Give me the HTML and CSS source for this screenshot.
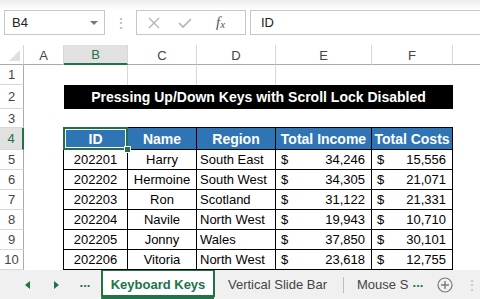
FILE: index.html
```html
<!DOCTYPE html>
<html lang="en">
  <head>
    <meta charset="UTF-8" />
    <link rel="stylesheet" href="styles.css" />
    <title>Keyboard Keys</title>
  </head>
  <body>
    <div id="ribbon-edge"></div>

    <!-- Formula bar -->
    <div id="formula-bar">
      <div class="name-box">
        <span>B4</span>
        <span class="drop"></span>
      </div>
      <div class="grip">&#8942;</div>
      <div class="fx-box">
        <svg width="12" height="12" viewBox="0 0 12 12"><path d="M1 1 L11 11 M11 1 L1 11" stroke="#b4b4b4" stroke-width="1.3" fill="none" /></svg>
        <svg width="14" height="12" viewBox="0 0 14 12"><path d="M1 6 L5 10 L13 2" stroke="#b4b4b4" stroke-width="1.6" fill="none" /></svg>
        <span class="fx">f<sub>x</sub></span>
      </div>
      <div class="formula-input">ID</div>
    </div>

    <!-- Sheet grid -->
    <div id="sheet">
      <div class="corner"><span class="tri"></span></div>
      <div class="hd">A</div>
      <div class="hd sel">B</div>
      <div class="hd">C</div>
      <div class="hd">D</div>
      <div class="hd">E</div>
      <div class="hd">F</div>
      <div class="hd last"></div>

      <div class="rh">1</div>
      <div class="c"></div>
      <div class="c g"></div>
      <div class="c g"></div>
      <div class="c g"></div>
      <div class="c"></div>
      <div class="c"></div>
      <div class="c"></div>

      <div class="rh">2</div>
      <div class="c"></div>
      <div class="title">Pressing Up/Down Keys with Scroll Lock Disabled</div>
      <div class="c"></div>

      <div class="rh">3</div>
      <div class="c"></div>
      <div class="c above"></div>
      <div class="c above"></div>
      <div class="c above"></div>
      <div class="c above"></div>
      <div class="c above"></div>
      <div class="c"></div>

      <div class="rh sel">4</div>
      <div class="c edge"></div>
      <div class="t th active">ID<span class="handle"></span></div>
      <div class="t th">Name</div>
      <div class="t th">Region</div>
      <div class="t th">Total Income</div>
      <div class="t th">Total Costs</div>
      <div class="c"></div>

      <div class="rh">5</div>
      <div class="c edge"></div>
      <div class="t mid">202201</div>
      <div class="t mid">Harry</div>
      <div class="t">South East</div>
      <div class="t money"><span>$</span><span>34,246</span></div>
      <div class="t money"><span>$</span><span>15,556</span></div>
      <div class="c"></div>

      <div class="rh">6</div>
      <div class="c edge"></div>
      <div class="t mid">202202</div>
      <div class="t mid">Hermoine</div>
      <div class="t">South West</div>
      <div class="t money"><span>$</span><span>34,305</span></div>
      <div class="t money"><span>$</span><span>21,071</span></div>
      <div class="c"></div>

      <div class="rh">7</div>
      <div class="c edge"></div>
      <div class="t mid">202203</div>
      <div class="t mid">Ron</div>
      <div class="t">Scotland</div>
      <div class="t money"><span>$</span><span>31,122</span></div>
      <div class="t money"><span>$</span><span>21,331</span></div>
      <div class="c"></div>

      <div class="rh">8</div>
      <div class="c edge"></div>
      <div class="t mid">202204</div>
      <div class="t mid">Navile</div>
      <div class="t">North West</div>
      <div class="t money"><span>$</span><span>19,943</span></div>
      <div class="t money"><span>$</span><span>10,710</span></div>
      <div class="c"></div>

      <div class="rh">9</div>
      <div class="c edge"></div>
      <div class="t mid">202205</div>
      <div class="t mid">Jonny</div>
      <div class="t">Wales</div>
      <div class="t money"><span>$</span><span>37,850</span></div>
      <div class="t money"><span>$</span><span>30,101</span></div>
      <div class="c"></div>

      <div class="rh">10</div>
      <div class="c edge"></div>
      <div class="t mid">202206</div>
      <div class="t mid">Vitoria</div>
      <div class="t">North West</div>
      <div class="t money"><span>$</span><span>23,618</span></div>
      <div class="t money"><span>$</span><span>12,755</span></div>
      <div class="c"></div>
    </div>

    <!-- Sheet tabs -->
    <div id="tabs">
      <span class="nav">
        <svg width="6" height="8" viewBox="0 0 6 8"><path d="M5 0 L0 4 L5 8 Z" fill="#217346" /></svg>
      </span>
      <span class="nav">
        <svg width="6" height="8" viewBox="0 0 6 8"><path d="M0 0 L5 4 L0 8 Z" fill="#217346" /></svg>
      </span>
      <span class="more">...</span>
      <div class="tab active">Keyboard Keys</div>
      <div class="tab plain">Vertical Slide Bar</div>
      <span class="sep"></span>
      <div class="tab cut">Mouse S</div>
      <span class="more green">...</span>
      <span class="add">
        <svg width="16" height="16" viewBox="0 0 16 16"><circle cx="8" cy="8" r="7" stroke="#7a7a7a" stroke-width="1.2" fill="none" /><path d="M8 4 V12 M4 8 H12" stroke="#7a7a7a" stroke-width="1.4" /></svg>
      </span>
      <span class="vdots">&#8942;</span>
    </div>
  </body>
</html>
```

FILE: styles.css
```css
body {
  margin: 0;
  width: 480px;
  height: 299px;
  overflow: hidden;
  background: #fff;
  font-family: "Liberation Sans", Arial, sans-serif;
  color: #000;
}

#ribbon-edge {
  height: 10px;
  background: linear-gradient(#ececec, #ffffff);
}

#formula-bar {
  display: flex;
  align-items: center;
  height: 25px;
  padding-left: 4px;
  margin-bottom: 10px;
}

.name-box {
  box-sizing: border-box;
  width: 101px;
  height: 25px;
  border: 1px solid #c6c6c6;
  display: flex;
  align-items: center;
  justify-content: space-between;
  padding: 0 6px 0 7px;
  font-size: 13px;
  color: #222;
}

.drop {
  width: 0;
  height: 0;
  border-left: 4px solid transparent;
  border-right: 4px solid transparent;
  border-top: 4px solid #777;
}

.grip {
  width: 31px;
  text-align: center;
  color: #b0b0b0;
  font-size: 14px;
}

.fx-box {
  box-sizing: border-box;
  width: 110px;
  height: 25px;
  border: 1px solid #c6c6c6;
  display: flex;
  align-items: center;
  gap: 18px;
  padding-left: 11px;
}

.fx {
  font-family: "Liberation Serif", serif;
  font-style: italic;
  font-size: 15px;
  color: #555;
  margin-left: 6px;
}

.fx sub {
  font-size: 11px;
  vertical-align: -1px;
}

.formula-input {
  box-sizing: border-box;
  flex: 1;
  height: 25px;
  margin-left: 4px;
  border: 1px solid #c6c6c6;
  border-right: none;
  font-size: 13px;
  color: #222;
  padding-left: 10px;
  line-height: 23px;
}

#sheet {
  display: grid;
  grid-template-columns: 24px 40px 64px 69px 79px 96px 81px 1fr;
  grid-template-rows: 20px 20px 24px 19px 22px repeat(6, 20px);
}

#sheet > div {
  box-sizing: border-box;
  font-size: 13px;
  display: flex;
  align-items: center;
  white-space: nowrap;
  overflow: hidden;
}

.corner {
  border-right: 1px solid #d4d4d4;
  border-bottom: 1px solid #ababab;
  position: relative;
}

.tri {
  position: absolute;
  right: 3px;
  bottom: 3px;
  width: 0;
  height: 0;
  border-left: 11px solid transparent;
  border-bottom: 11px solid #dfdfdf;
}

.hd {
  justify-content: center;
  color: #444;
  border-right: 1px solid #d8d8d8;
  border-bottom: 1px solid #ababab;
  padding-top: 1px;
}

.hd.sel {
  background: #e1e1e1;
  color: #217346;
  border-bottom: 2px solid #217346;
}

.hd.last {
  border-right: none;
}

.rh {
  justify-content: center;
  color: #444;
  border-right: 1px solid #ababab;
  border-bottom: 1px solid #d8d8d8;
}

.rh.sel {
  background: #e1e1e1;
  color: #217346;
  border-right: 2px solid #217346;
}

.g {
  border-right: 1px solid #d8d8d8;
}

.above {
  border-bottom: 1px solid #000;
}

.edge {
  border-right: 1px solid #000;
}

.title {
  grid-column: 3 / 8;
  background: #000;
  color: #fff;
  font-weight: bold;
  font-size: 14px !important;
  justify-content: center;
}

.t {
  border-right: 1px solid #000;
  border-bottom: 1px solid #000;
  padding: 0 3px;
}

.th {
  background: #2f75b5;
  color: #fff;
  font-weight: bold;
  font-size: 14px !important;
  justify-content: center;
}

.mid {
  justify-content: center;
}

.money {
  justify-content: space-between;
  padding: 0 6px 0 5px !important;
}

.active {
  position: relative;
  overflow: visible !important;
  z-index: 1;
}

.active::before {
  content: "";
  position: absolute;
  left: -1px;
  top: -1px;
  right: -1px;
  bottom: -1px;
  border: 2px solid #217346;
  box-shadow: inset 0 0 0 1px #fff;
}

.handle {
  position: absolute;
  right: -4px;
  bottom: -4px;
  width: 5px;
  height: 5px;
  background: #217346;
  border: 1px solid #fff;
}

#tabs {
  display: flex;
  align-items: center;
  height: 29px;
  background: #f0f0f0;
  font-size: 13px;
  color: #444;
  white-space: nowrap;
  overflow: hidden;
}

#tabs > * {
  flex-shrink: 0;
}

.nav {
  display: flex;
  justify-content: center;
  width: 29px;
}

.nav:first-child {
  margin-left: 13px;
}

.more {
  color: #217346;
  font-weight: bold;
  width: 28px;
  text-align: center;
  padding-bottom: 4px;
}

.tab {
  height: 29px;
  display: flex;
  align-items: center;
  box-sizing: border-box;
}

.tab.active {
  background: #fff;
  color: #217346;
  font-weight: bold;
  width: 113px;
  justify-content: center;
  border-left: 1px solid #d4d4d4;
  border-bottom: 3px solid #217346;
  padding-top: 2px;
  margin-left: 2px;
}

.tab.plain {
  width: 129px;
  padding-left: 14px;
}

.sep {
  width: 1px;
  height: 16px;
  background: #bcbcbc;
}

.tab.cut {
  width: 62px;
  padding-left: 13px;
}

.more.green {
  width: 24px;
}

.add {
  display: flex;
  margin-left: 7px;
}

.vdots {
  margin-left: 12px;
  color: #c0c0c0;
  font-size: 14px;
}
```
